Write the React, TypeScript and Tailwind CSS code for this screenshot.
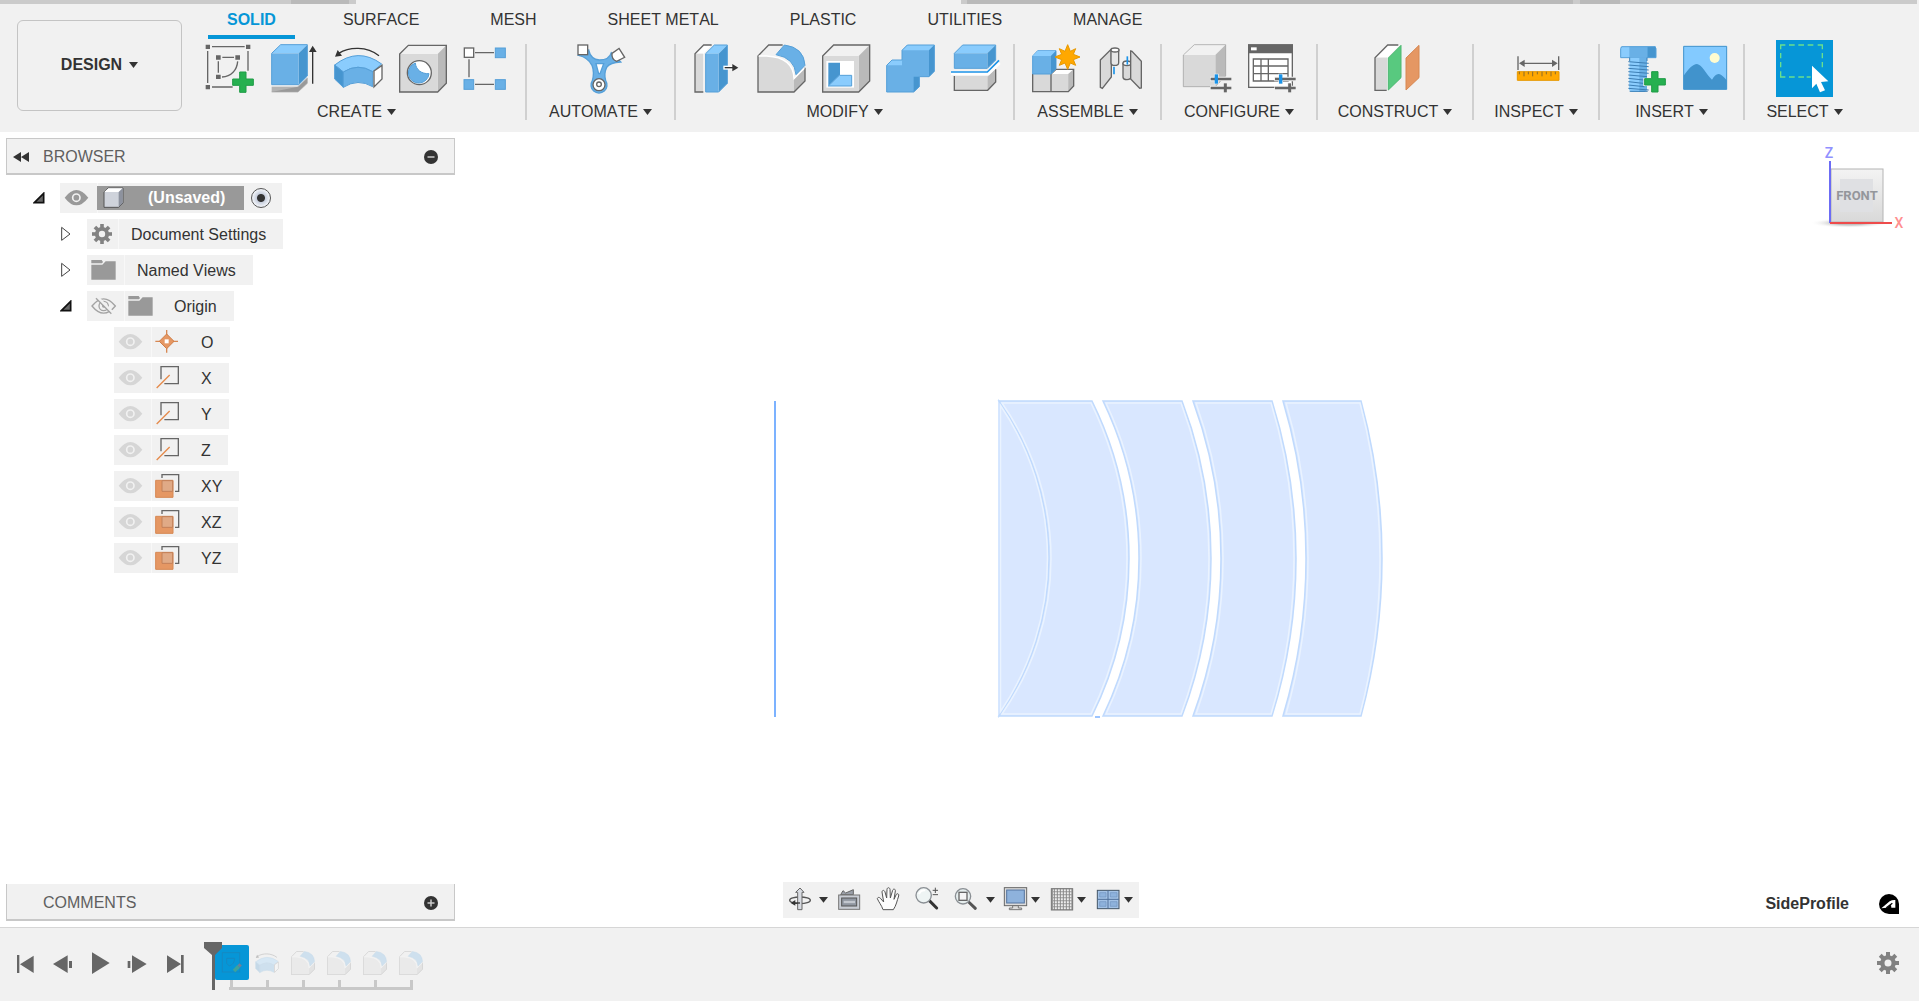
import { useState, type ReactNode } from "react";

const BF = "#69b0e6";
const BT = "#8accfd";
const BS = "#4695cf";
const BL = "#559fd8";
const GF = "#d9d9d9";
const GT = "#f1f1f1";
const GS = "#bababa";
const GL = "#666666";

type IconProps = { x: number; y?: number; w?: number; h?: number; className?: string; children: ReactNode };

/* Icons are drawn at three units per screen pixel. */
function Icon({ x, y = 120, w = 171, h = 171, className = "size-[57px]", children }: IconProps) {
  return (
    <svg viewBox={`${x} ${y} ${w} ${h}`} className={`${className} block shrink-0`} fill="none" aria-hidden="true">
      {children}
    </svg>
  );
}

function Caret() {
  return (
    <svg viewBox="0 0 9 6" className="h-1.5 w-[9px] shrink-0" fill="#333" aria-hidden="true">
      <path d="M0 0h9L4.500 6z" />
    </svg>
  );
}

const Plus = ({ x, y }: { x: number; y: number }) => (
  <path
    transform={`translate(${x} ${y})`}
    d="M22 1H41V22H63V41H41V62H22V41H1V22H22Z"
    fill="#26b050"
    stroke="#1f9c46"
    strokeWidth="3"
  />
);

const SketchIcon = () => (
  <Icon x={594}>
    <g stroke={GL} strokeWidth="4">
      <path d="M636 140H734M623 153V249M744 153V212M636 261H698M667 172H702M655 184V218" />
      <path d="M713 184C711 210 694 230 666 231" />
    </g>
    <g fill={GL}>
      <path d="M617 134h13v13h-13zM738 134h13v13h-13zM617 255h13v13h-13zM648 166h14v13h-14zM706 166h14v13h-14zM648 224h14v13h-14z" />
    </g>
    <Plus x={697} y={215} />
  </Icon>
);

const ExtrudeIcon = () => (
  <Icon x={789}>
    <path d="M815 260H894V276H815Z" fill="#b3b3b3" />
    <path d="M815 276H894L922 250V234L894 260" fill="#999" stroke="#aaa" strokeWidth="2" />
    <path d="M815 160L842 134H922L896 160Z" fill={BT} />
    <path d="M896 160L922 134V228L896 254Z" fill={BS} />
    <path d="M815 160H896V254H815Z" fill={BF} />
    <path d="M815 160L842 134H922V228L896 254H815Z" stroke={BL} strokeWidth="3" />
    <path d="M938 152V251" stroke="#333" strokeWidth="4" />
    <path d="M938 137L950 156H927Z" fill="#333" />
  </Icon>
);

const RevolveShape = () => (
  <>
    <path d="M1004 195Q1074 140 1145 192L1118 215Q1074 188 1030 216Z" fill={BT} stroke={BL} strokeWidth="3" />
    <path d="M1004 195L1030 216V262L1004 237Z" fill={BS} stroke={BL} strokeWidth="3" />
    <path d="M1030 216Q1074 188 1118 215V260Q1074 234 1030 262Z" fill={BF} stroke={BL} strokeWidth="3" />
    <path d="M1122 213L1146 196V237L1122 261Z" fill="#fff" stroke={GL} strokeWidth="4" />
    <path d="M1016 160C1048 140 1100 138 1137 167" stroke="#333" strokeWidth="4" />
    <path d="M1005 170L1013 150L1026 167Z" fill="#333" />
  </>
);

const RevolveIcon = () => (
  <Icon x={984}>
    <RevolveShape />
  </Icon>
);

const HoleIcon = () => (
  <Icon x={1179}>
    <path d="M1199 162L1225 136H1339L1313 162Z" fill={GT} />
    <path d="M1313 162L1339 136V250L1313 276Z" fill={GS} />
    <path d="M1199 162H1313V276H1199Z" fill={GF} />
    <path d="M1199 162L1225 136H1339V250L1313 276H1199Z" stroke={GL} strokeWidth="4" />
    <circle cx="1258" cy="218" r="36" fill="#fff" stroke={GL} strokeWidth="4" />
    <path d="M1246 189A31 31 0 1 0 1287 221C1265 222 1248 210 1246 189Z" fill={BF} stroke={BL} strokeWidth="3" />
  </Icon>
);

const PatternIcon = () => (
  <Icon x={1374}>
    <path d="M1425 158H1482M1407 178V232M1425 253H1482" stroke={GL} strokeWidth="4" />
    <rect x="1393" y="144" width="28" height="28" fill="#fff" stroke={GL} strokeWidth="4" />
    <g fill={BF} stroke={BL} strokeWidth="3">
      <rect x="1486" y="144" width="30" height="29" />
      <rect x="1486" y="239" width="30" height="29" />
      <rect x="1392" y="239" width="29" height="29" />
    </g>
  </Icon>
);

const AutomateIcon = () => (
  <Icon x={216}>
    <path
      d="M236 166Q264 172 276 196Q284 218 277 242A24 24 0 1 0 317 242Q311 220 320 202Q330 187 362 186L334 158Q328 180 298 180Q272 178 266 150Z"
      fill={BF}
      stroke={BL}
      strokeWidth="4"
    />
    <path d="M288 191H311L300 221H296Z" fill="#fff" stroke={BL} strokeWidth="4" />
    <rect x="234" y="135" width="29" height="29" fill="#fff" stroke={GL} strokeWidth="4" />
    <path d="M357 145L374 172L350 184Q334 178 336 160Z" fill="#fff" stroke={GL} strokeWidth="4" />
    <circle cx="297" cy="254" r="18" fill="#fff" stroke={GL} strokeWidth="4" />
    <circle cx="297" cy="253" r="7" fill="#fff" stroke={GL} strokeWidth="4" />
  </Icon>
);

const PressPullIcon = () => (
  <Icon x={558}>
    <path d="M585 161L611 135H635L611 161Z" fill="#fff" />
    <path d="M585 161H609V276H585Z" fill={GF} />
    <path d="M635 135H611L585 161V276H610" stroke={GL} strokeWidth="4" />
    <path d="M617 161L643 135H682L656 161Z" fill={BT} />
    <path d="M656 161L682 135V250L656 276Z" fill={BS} />
    <path d="M617 161H656V276H617Z" fill={BF} />
    <path d="M617 161L643 135H682V250L656 276H617Z" stroke={BL} strokeWidth="3" />
    <path d="M670 203H704" stroke="#fff" strokeWidth="12" />
    <path d="M674 203H702" stroke="#333" strokeWidth="4" />
    <path d="M697 192L715 203L697 214Z" fill="#333" />
  </Icon>
);

const FilletShape = () => (
  <>
    <path d="M774 168L806 135H852L824 166Q796 162 774 168Z" fill={GT} />
    <path d="M774 168H800Q880 172 882 236V276H774Z" fill={GF} />
    <path d="M882 236L915 203V244L882 276Z" fill={GS} />
    <path d="M848 135H806L774 168V276H882L915 243V203" stroke={GL} strokeWidth="4" />
    <path d="M776 168H800Q880 172 882 236L913 205" stroke="#fff" strokeWidth="4" />
    <path d="M853 135Q912 142 915 196L888 224Q884 174 828 164Z" fill={BF} stroke={BL} strokeWidth="3" />
  </>
);

const FilletIcon = () => (
  <Icon x={753}>
    <FilletShape />
  </Icon>
);

const ShellIcon = () => (
  <Icon x={948}>
    <path d="M968 168L1001 135H1109L1076 168Z" fill={GT} />
    <path d="M1076 168L1109 135V243L1076 276Z" fill={GS} />
    <path d="M968 168H1076V276H968Z" fill={GF} />
    <path d="M968 168L1001 135H1109V243L1076 276H968Z" stroke={GL} strokeWidth="4" />
    <path d="M979 183H1062V263H979Z" fill="#fff" />
    <path d="M985 188H1020V224L985 258Z" fill={BS} />
    <path d="M985 258L1018 226H1055V258Z" fill={BT} stroke={BL} strokeWidth="3" />
  </Icon>
);

const CombineIcon = () => (
  <Icon x={1143}>
    <path d="M1160 196L1176 180H1206V151L1222 135H1303V214L1287 230H1258V260L1241 276H1160Z" fill={BF} />
    <path d="M1160 196L1176 180H1206V196ZM1206 151L1222 135H1303L1287 151Z" fill={BT} />
    <path d="M1287 151L1303 135V214L1287 230ZM1241 230H1258V260L1241 276Z" fill={BS} />
    <path
      d="M1160 196L1176 180H1206V151L1222 135H1303V214L1287 230H1258V260L1241 276H1160Z"
      stroke={BL}
      strokeWidth="3"
    />
  </Icon>
);

const SplitIcon = () => (
  <Icon x={1338}>
    <path d="M1363 228H1463L1487 206V246L1463 271H1363Z" fill={GF} />
    <path d="M1463 230L1487 206V246L1463 271Z" fill={GS} />
    <path d="M1363 228V271H1463L1487 246V208" stroke={GL} strokeWidth="4" />
    <path d="M1353 219H1464L1497 187" stroke="#fff" strokeWidth="14" />
    <path d="M1353 216H1462L1497 181" stroke="#1b93e8" strokeWidth="5" />
    <path d="M1363 160L1388 135H1487L1462 160Z" fill={BT} />
    <path d="M1462 160L1487 135V180L1462 205Z" fill={BS} />
    <path d="M1363 160H1462V205H1363Z" fill={BF} />
    <path d="M1363 160L1388 135H1487V180L1462 205H1363Z" stroke={BL} strokeWidth="3" />
  </Icon>
);

const NewComponentIcon = () => (
  <Icon x={80}>
    <path d="M97 222H152V275H97Z" fill={GF} />
    <path d="M152 222L167 208H220V258L204 275H152Z" fill={GF} />
    <path d="M152 222L167 208H220L204 222Z" fill="#fff" />
    <path d="M204 222L220 208V258L204 275Z" fill={GS} />
    <path d="M97 222V275H204L220 258V208H167L152 222V275" stroke={GL} strokeWidth="4" />
    <path d="M97 168L112 152H167V206L152 222H97Z" fill={BF} stroke={BL} strokeWidth="3" />
    <path d="M97 168L112 152H167L152 168Z" fill={BT} />
    <path d="M152 168L167 152V206L152 222Z" fill={BS} />
    <path
      d="M202 134L210 154L226 146L219 163L239 171L219 179L226 196L210 189L202 208L194 189L177 196L184 179L164 171L184 163L177 146L194 154Z"
      fill="#ffa800"
      stroke="#e79800"
      strokeWidth="3"
    />
  </Icon>
);

const JointIcon = () => (
  <Icon x={275}>
    <path d="M300 180L333 147V231L306 265L300 262Z" fill={GF} stroke={GL} strokeWidth="4" />
    <path d="M332 150V188Q332 196 343 196Q355 196 355 188V150Z" fill="#e6e6e6" stroke={GL} strokeWidth="4" />
    <ellipse cx="344" cy="150" rx="12" ry="6" fill="#fff" stroke={GL} strokeWidth="4" />
    <path d="M341 200V223" stroke="#1b93e8" strokeWidth="5" />
    <path d="M368 190V232Q369 239 380 239Q392 238 392 232V190Z" fill={GF} stroke={GL} strokeWidth="4" />
    <ellipse cx="380" cy="190" rx="12" ry="7" fill="#fff" stroke={GL} strokeWidth="4" />
    <path d="M381 169V194" stroke="#1b93e8" strokeWidth="5" />
    <path d="M391 153L395 154L423 184V264L418 265L391 237Z" fill={GF} stroke={GL} strokeWidth="4" />
  </Icon>
);

const Sliders = ({ x }: { x: number }) => (
  <g transform={`translate(${x} 0)`}>
    <path d="M630 237H695M630 264H695M649 221V253M676 248V278" stroke="#f1f1f1" strokeWidth="14" />
    <path d="M632 237H694M632 264H694" stroke={GL} strokeWidth="7" />
    <path d="M676 250V277" stroke={GL} strokeWidth="9" />
    <path d="M649 223V251" stroke="#1b93e8" strokeWidth="10" />
  </g>
);

const ConfigureIcon = () => (
  <Icon x={534}>
    <path d="M550 165L583 134H677L646 165Z" fill={GT} />
    <path d="M646 165L677 134V228L646 260Z" fill={GS} />
    <path d="M550 165H646V260H550Z" fill={GF} />
    <path d="M550 165L583 134H677V228L646 260H550Z" stroke="#999" strokeWidth="2" />
    <Sliders x={0} />
  </Icon>
);

const ConfigTableIcon = () => (
  <Icon x={729}>
    <rect x="746" y="135" width="131" height="127" fill="#fff" stroke={GL} strokeWidth="4" />
    <path d="M744 133H879V160H744Z" fill={GL} />
    <path d="M753 142H770V151H753Z" fill="#fff" />
    <path d="M760 177H864V243H760ZM783 177V243M805 177V243M760 198H864M760 221H864" stroke={GL} strokeWidth="4" />
    <Sliders x={193} />
  </Icon>
);

const ConstructIcon = () => (
  <Icon x={1100}>
    <path d="M1124 173L1160 135H1198L1162 172Z" fill="#fff" />
    <path d="M1124 173H1160V271H1124Z" fill={GF} />
    <path d="M1194 135H1162L1124 173V271H1159" stroke={GL} strokeWidth="4" />
    <path d="M1164 174L1202 136V233L1164 270Z" fill="#58c97f" stroke="#4cb871" strokeWidth="3" />
    <path d="M1217 174L1256 136V233L1217 270Z" fill="#e59763" stroke="#d78853" strokeWidth="3" />
  </Icon>
);

const MeasureIcon = () => (
  <Icon x={202}>
    <path d="M232 169V210M354 169V210M240 190H346" stroke={GL} strokeWidth="4" />
    <path d="M235 190L252 179V201ZM351 190L334 179V201Z" fill={GL} />
    <path d="M230 215H355V241H230Z" fill="#ffa800" stroke="#e79800" strokeWidth="3" />
    <path
      d="M236 215V223M250 215V229M263 215V223M276 215V229M290 215V223M304 215V229M317 215V223M331 215V229M344 215V223"
      stroke="#8a6a2a"
      strokeWidth="3"
    />
  </Icon>
);

const BoltIcon = () => (
  <Icon x={512}>
    <path d="M541 140H647V173H541Z" fill={BT} />
    <path d="M567 140H621V173H567Z" fill={BF} />
    <path d="M621 140H647V173H621Z" fill={BS} />
    <path d="M544 140H644L647 146V173H541V146Z" stroke={BL} strokeWidth="3" />
    <path d="M568 173H620V270L612 276H574L566 270Z" fill={BT} />
    <path d="M597 173H620V270L612 276H597Z" fill={BF} />
    <path
      d="M568 173V183M620 173V183M564 185L625 190M564 195L625 200M564 205L625 210M564 215L625 220M564 225L620 230M564 235L610 240M564 245L608 250M564 255L612 260M564 265L625 270M568 274H622"
      stroke="#3d7fb5"
      strokeWidth="3"
    />
    <path d="M632 212H656V234H678V258H656V280H632V258H609V234H632Z" fill="#f1f1f1" />
    <Plus x={612} y={214} />
  </Icon>
);

const ImageIcon = () => (
  <Icon x={707}>
    <path d="M730 139H859V268H730Z" fill="#83caff" />
    <path d="M730 227C745 207 757 192 770 192C786 194 798 224 815 239C822 228 828 221 836 222C844 223 851 232 859 241V268H730Z" fill="#4193cc" />
    <circle cx="823" cy="174" r="15" fill="#fffcd0" />
    <path d="M730 139H859V268H730Z" stroke="#3f92cc" strokeWidth="3" />
  </Icon>
);

const SelectIcon = () => (
  <Icon x={1008}>
    <path d="M1008 120H1179V291H1008Z" fill="#0696d7" />
    <path
      d="M1022 148V135H1036M1047 135H1064M1075 135H1092M1103 135H1120M1133 135H1147V148M1147 159V175M1147 186V202M1022 159V175M1022 186V202M1022 214V231H1036M1047 231H1064M1075 231H1092M1100 231H1112"
      stroke="#6ae08d"
      strokeWidth="4"
    />
    <path d="M1116 197L1165 244L1143 246L1155 271L1140 277L1129 251L1116 265Z" fill="#fff" />
  </Icon>
);

type Group = { label: string; size: string; icons: [string, () => ReactNode][] };

const groups: Group[] = [
  {
    label: "CREATE",
    size: "min-w-[337px]",
    icons: [
      ["Create Sketch", SketchIcon],
      ["Extrude", ExtrudeIcon],
      ["Revolve", RevolveIcon],
      ["Hole", HoleIcon],
      ["Pattern", PatternIcon],
    ],
  },
  { label: "AUTOMATE", size: "min-w-[147px]", icons: [["Automated Modeling", AutomateIcon]] },
  {
    label: "MODIFY",
    size: "min-w-[337px]",
    icons: [
      ["Press Pull", PressPullIcon],
      ["Fillet", FilletIcon],
      ["Shell", ShellIcon],
      ["Combine", CombineIcon],
      ["Split Body", SplitIcon],
    ],
  },
  {
    label: "ASSEMBLE",
    size: "min-w-[145px]",
    icons: [
      ["New Component", NewComponentIcon],
      ["Joint", JointIcon],
    ],
  },
  {
    label: "CONFIGURE",
    size: "min-w-[154px]",
    icons: [
      ["Configure", ConfigureIcon],
      ["Configuration Table", ConfigTableIcon],
    ],
  },
  { label: "CONSTRUCT", size: "min-w-[154px]", icons: [["Offset Plane", ConstructIcon]] },
  { label: "INSPECT", size: "min-w-[124px]", icons: [["Measure", MeasureIcon]] },
  {
    label: "INSERT",
    size: "min-w-[143px]",
    icons: [
      ["Insert Fastener", BoltIcon],
      ["Insert Image", ImageIcon],
    ],
  },
  { label: "SELECT", size: "min-w-[119px]", icons: [["Select", SelectIcon]] },
];

const tabs = ["SOLID", "SURFACE", "MESH", "SHEET METAL", "PLASTIC", "UTILITIES", "MANAGE"];

function Header() {
  const [active, setActive] = useState("SOLID");
  return (
    <header className="shrink-0 bg-[#f1f1f1] pb-2">
      <div className="flex h-1">
        <div className="w-[291px] bg-[#cbcbcb]" />
        <div className="w-[58px] bg-[#bababa]" />
        <div className="w-[7px] bg-[#cbcbcb]" />
        <div className="w-[605px]" />
        <div className="w-1.5 bg-[#cbcbcb]" />
        <div className="w-[606px] bg-[#bababa]" />
        <div className="w-[7px] bg-[#cbcbcb]" />
        <div className="w-10 bg-[#bababa]" />
        <div className="mr-0.5 flex-1 bg-[#cbcbcb]" />
      </div>
      <div className="flex">
        <button className="mt-4 ml-[17px] flex h-[91px] w-[165px] shrink-0 items-center justify-center gap-[7px] rounded-md border border-[#c4c4c4] pb-0.5 font-bold">
          DESIGN
          <Caret />
        </button>
        <div className="ml-1.5 min-w-0 flex-1">
          <nav className="flex gap-[33px] pl-5" aria-label="Workspaces">
            {tabs.map((t) => (
              <button
                key={t}
                onClick={() => setActive(t)}
                className={`h-[35px] shrink-0 border-b-4 px-[19px] leading-4 whitespace-nowrap first:-mr-1 ${
                  t === active ? "border-[#0696d7] font-bold text-[#0696d7]" : "border-transparent"
                }`}
              >
                {t}
              </button>
            ))}
          </nav>
          <div className="flex overflow-hidden pt-px">
            {groups.map((g, i) => (
              <div key={g.label} className="flex shrink-0">
                <div className={`flex flex-col items-center ${g.size}`}>
                  <div className="flex gap-2">
                    {g.icons.map(([name, Art]) => (
                      <button key={name} aria-label={name}>
                        <Art />
                      </button>
                    ))}
                  </div>
                  <button className="mt-[3px] flex h-6 items-center gap-[5px]">
                    {g.label}
                    <Caret />
                  </button>
                </div>
                {i < groups.length - 1 && <div className="mt-1 h-[76px] w-0.5 bg-[#d0d0d0]" />}
              </div>
            ))}
          </div>
        </div>
      </div>
    </header>
  );
}

/* ---------- Browser tree ---------- */

const Eye = ({ tone }: { tone: string }) => (
  <Icon x={180} y={160} w={111} h={90} className="h-[30px] w-[37px]">
    <path d="M194 204Q229 158 265 204Q229 250 194 204Z" fill={tone} />
    <circle cx="229" cy="204" r="11" stroke="#f1f1f1" strokeWidth="5" />
  </Icon>
);

const EyeOff = () => (
  <Icon x={261} y={484} w={111} h={90} className="h-[30px] w-[37px]">
    <path d="M276 529Q311 486 346 529Q311 572 276 529Z" stroke="#a3a3a3" strokeWidth="4" />
    <circle cx="311" cy="529" r="14" stroke="#a3a3a3" strokeWidth="4" />
    <circle cx="311" cy="529" r="5" fill="#a3a3a3" />
    <path d="M293 504L339 550" stroke="#f1f1f1" strokeWidth="9" />
    <path d="M288 506L334 552" stroke="#a3a3a3" strokeWidth="4" />
  </Icon>
);

const Folder = () => (
  <Icon x={261} y={376} w={111} h={90} className="h-[30px] w-[37px]">
    <path d="M274 391H305L309 397L306 401H274Z" fill="#999" />
    <path d="M274 405H307L317 395H347V450H274Z" fill="#999" />
  </Icon>
);

const gearTeeth = [0, 45, 90, 135, 180, 225, 270, 315];

const Gear = ({ className }: { className: string }) => (
  <Icon x={0} y={0} w={66} h={66} className={className}>
    {gearTeeth.map((a) => (
      <path key={a} d="M27 0H39V16H27Z" fill="#828282" transform={`rotate(${a} 33 33)`} />
    ))}
    <circle cx="33" cy="33" r="17" stroke="#828282" strokeWidth="13" />
  </Icon>
);

const Origin = () => (
  <Icon x={455} y={21} w={111} h={90} className="h-[30px] w-[37px]">
    <path d="M502 30V98M468 64H536" stroke="#d78853" strokeWidth="4" />
    <path d="M502 42L524 64L502 86L480 64Z" fill="#e59763" stroke="#cf7e48" strokeWidth="3" />
    <path d="M496 58H508V70H496Z" fill="#fff" />
  </Icon>
);

const Axis = () => (
  <Icon x={455} y={129} w={111} h={90} className="h-[30px] w-[37px]">
    <path d="M485 178V140H537V191H495" stroke={GL} strokeWidth="4" />
    <path d="M472 204L511 165" stroke="#e58a4a" strokeWidth="4" />
  </Icon>
);

const Plane = () => (
  <Icon x={455} y={453} w={111} h={90} className="h-[30px] w-[37px]">
    <path d="M488 474V464H538V514H527" stroke={GL} strokeWidth="4" />
    <path d="M469 481H521V532H469Z" fill="#e59763" stroke="#d78853" strokeWidth="3" />
    <path d="M488 482H520V514H488Z" fill="#e0aa86" stroke="#c28058" strokeWidth="3" />
  </Icon>
);

const Twisty = ({ open }: { open: boolean }) => (
  <button aria-label={open ? "Collapse" : "Expand"} className="mr-[15px] w-3 shrink-0">
    {open ? (
      <Icon x={99} y={186} w={36} h={36} className="size-3">
        <path d="M103 218L131 190V218Z" fill="#666" stroke="#111" strokeWidth="5" />
      </Icon>
    ) : (
      <Icon x={180} y={288} w={36} h={48} className="h-4 w-3">
        <path d="M185 292V331L210 312Z" fill="#fff" stroke="#444" strokeWidth="3" />
      </Icon>
    )}
  </button>
);

function Cell({ children }: { children: ReactNode }) {
  return <span className="flex h-[30px] shrink-0 items-center shadow-[1px_0_0_#f8f8f8]">{children}</span>;
}

function Row({ indent, open, children }: { indent: string; open?: boolean; children: ReactNode }) {
  return (
    <li className={`flex items-center ${indent}`}>
      {open !== undefined && <Twisty open={open} />}
      <div className="flex h-[30px] items-center bg-[#f1f1f1]">{children}</div>
    </li>
  );
}

function Label({ children }: { children: ReactNode }) {
  return <span className="pt-px pr-[17px] pl-[13px]">{children}</span>;
}

const leaves: [string, () => ReactNode][] = [
  ["O", Origin],
  ["X", Axis],
  ["Y", Axis],
  ["Z", Axis],
  ["XY", Plane],
  ["XZ", Plane],
  ["YZ", Plane],
];

const Badge = ({ plus }: { plus?: boolean }) => (
  <svg viewBox="0 0 14 14" className="size-3.5" aria-hidden="true">
    <circle cx="7" cy="7" r="7" fill="#333" />
    <path d={plus ? "M3.500 7h7M7 3.500v7" : "M3.500 7h7"} stroke="#ccc" strokeWidth="1.500" />
  </svg>
);

function Browser() {
  return (
    <section aria-label="Browser" className="relative w-[449px]">
      <div className="flex h-[37px] items-center border border-b-2 border-[#c8c8c8] bg-[#f1f1f1] pt-px pl-1.5 text-[#5f5f5f]">
        <button aria-label="Collapse panel">
          <svg viewBox="0 0 16 10" className="h-2.5 w-4" fill="#333" aria-hidden="true">
            <path d="M8 0v10L0 5zM16 0v10L8 5z" />
          </svg>
        </button>
        <h2 className="ml-3.5 flex-1">BROWSER</h2>
        <button aria-label="Hide browser" className="mr-4">
          <Badge />
        </button>
      </div>
      <ul className="-ml-1.5 flex flex-col gap-1.5 pt-2">
        <Row indent="pl-[33px]" open>
          <Cell>
            <Eye tone="#999" />
          </Cell>
          <span className="flex h-6 w-[147px] items-center bg-[#999] pl-1.5 font-bold text-white">
            <Icon x={311} y={168} w={63} h={66} className="mr-6 h-[22px] w-[21px]">
              <path d="M314 183L326 171H371V216L358 229H314Z" fill="#cfd3db" stroke="#555" strokeWidth="3" />
              <path d="M315 183L327 172H370L358 183Z" fill="#fff" />
              <path d="M358 183L370 172V216L358 228Z" fill="#8d929e" />
            </Icon>
            (Unsaved)
          </span>
          <label className="flex w-[38px] items-center pl-[7px]">
            <input
              type="radio"
              defaultChecked
              aria-label="Activate component"
              className="size-5 appearance-none rounded-full border border-[#555] bg-[radial-gradient(circle,#333_0_3.5px,#c9d0de_4.5px,#f4f6fa_9px)]"
            />
          </label>
        </Row>
        <Row indent="pl-[60px]" open={false}>
          <Cell>
            <span className="w-[31px] pl-[5px]">
              <Gear className="size-5" />
            </span>
          </Cell>
          <Label>Document Settings</Label>
        </Row>
        <Row indent="pl-[60px]" open={false}>
          <Cell>
            <Folder />
          </Cell>
          <Label>Named Views</Label>
        </Row>
        <Row indent="pl-[60px]" open>
          <Cell>
            <EyeOff />
          </Cell>
          <Folder />
          <Label>Origin</Label>
        </Row>
        {leaves.map(([name, Art]) => (
          <Row key={name} indent="pl-[114px]">
            <Cell>
              <Eye tone="#d6d6d6" />
            </Cell>
            <Art />
            <Label>{name}</Label>
          </Row>
        ))}
      </ul>
    </section>
  );
}

/* ---------- Sketch geometry ---------- */

const TOP = 401;
const BOTTOM = 716;

const radius = (half: number, bulge: number) => (half * half + bulge * bulge) / (2 * bulge);

function band(lx: number, lb: number, rx: number, rb: number, inset = 0) {
  const t = TOP + inset;
  const b = BOTTOM - inset;
  const half = (b - t) / 2;
  const l = lx + inset * 1.5;
  const r = rx - inset / 2;
  const rl = radius(half, lb + inset - l);
  const rr = radius(half, rb - inset - r);
  return `M${l} ${t}H${r}A${rr} ${rr} 0 0 1 ${r} ${b}H${l}A${rl} ${rl} 0 0 0 ${l} ${t}Z`;
}

function lens(x: number, bulgeX: number, inset = 0) {
  const t = TOP + inset * 3;
  const b = BOTTOM - inset * 3;
  const r = radius((b - t) / 2, bulgeX - x - inset * 2);
  return `M${x + inset} ${t}A${r} ${r} 0 0 1 ${x + inset} ${b}Z`;
}

const bands: [number, number, number, number][] = [
  [999, 1049, 1092, 1129],
  [1103, 1139, 1182, 1211],
  [1193, 1221, 1272, 1296],
  [1283, 1306, 1361, 1382],
];

function SketchView() {
  return (
    <svg
      viewBox="0 132 1919 795"
      className="absolute inset-0 h-full w-full"
      fill="none"
      role="img"
      aria-label="Side profile sketch"
    >
      <path d="M775 401V717" stroke="#7cb2ff" strokeWidth="2" />
      <path d={lens(999, 1049)} fill="#d9e7ff" stroke="#c9dfff" strokeWidth="1.500" />
      {bands.map((b) => (
        <path key={b[0]} d={band(...b)} fill="#d9e7ff" stroke="#c0dafd" strokeWidth="1.500" />
      ))}
      <path d={lens(999, 1049, 1.5)} stroke="#eaf3ff" strokeWidth="1.500" />
      {bands.map((b) => (
        <path key={b[0]} d={band(...b, 2)} stroke="#eaf3ff" strokeWidth="1.500" />
      ))}
      <path d="M1095 717H1100" stroke="#7cb2ff" strokeWidth="1.500" />
    </svg>
  );
}

function ViewCube() {
  return (
    <svg
      viewBox="1800 140 110 95"
      className="absolute top-2 right-[9px] h-[95px] w-[110px]"
      role="img"
      aria-label="View cube"
    >
      <defs>
        <linearGradient id="face" x1="0" y1="0" x2="0" y2="1">
          <stop offset="0" stopColor="#f3f3f3" />
          <stop offset="1" stopColor="#d9d9d9" />
        </linearGradient>
        <radialGradient id="shade">
          <stop offset="0.400" stopColor="#999" stopOpacity="0.600" />
          <stop offset="1" stopColor="#fff" stopOpacity="0" />
        </radialGradient>
      </defs>
      <ellipse cx="1850" cy="223" rx="40" ry="5" fill="url(#shade)" />
      <rect x="1831" y="169" width="52" height="53" fill="url(#face)" stroke="#b4b4b4" />
      <rect x="1840" y="179" width="33" height="33" fill="#dfe0e3" />
      <path d="M1830 161V223" stroke="#6c6cf5" strokeWidth="2" />
      <path d="M1830 223H1892" stroke="#ee4b4b" strokeWidth="2" />
      <g fontFamily="Roboto, sans-serif" textAnchor="middle">
        <text x="1857" y="200" fontSize="13" fontWeight="700" fill="#94969b">
          FRONT
        </text>
        <text x="1829" y="158" fontSize="14" fontWeight="500" fill="#9090ff">
          Z
        </text>
        <text x="1899" y="228" fontSize="14" fontWeight="500" fill="#ff8f8f">
          X
        </text>
      </g>
    </svg>
  );
}

/* ---------- Navigation bar ---------- */

type NavItem = { name: string; x: number; w: number; size: string; art: ReactNode };

const drop = (x: number) => <path d={`M${x} 81h27l-13.500 17z`} fill="#333" />;

const navItems: NavItem[] = [
  {
    name: "Orbit",
    x: 39,
    w: 150,
    size: "w-[50px]",
    art: (
      <>
        <ellipse cx="90" cy="91" rx="31" ry="10" stroke="#555" strokeWidth="4" />
        <path d="M90 54L102 67H96V119H83V67H77Z" fill="#d9dce2" stroke="#666" strokeWidth="3" />
        <path d="M66 99H90" stroke="#333" strokeWidth="4" />
        <path d="M62 99L76 90V107Z" fill="#333" />
        {drop(147)}
      </>
    ),
  },
  {
    name: "Look At",
    x: 189,
    w: 105,
    size: "w-[35px]",
    art: (
      <>
        <path d="M212 74L219 62L227 69L250 59V74Z" fill="#9a9fa8" stroke="#666" strokeWidth="3" />
        <rect x="206" y="75" width="63" height="43" fill="#c9cdd4" stroke="#777" strokeWidth="3" />
        <rect x="215" y="84" width="45" height="24" fill="#9096a0" stroke="#555" strokeWidth="3" />
        <path d="M221 96H255" stroke="#c3c7ce" strokeWidth="7" />
      </>
    ),
  },
  {
    name: "Pan",
    x: 294,
    w: 117,
    size: "w-[39px]",
    art: (
      <path
        d="M339 119C335 106 326 96 322 86C323 80 330 82 333 87L341 96L336 66C337 59 343 60 345 66L350 84L351 58C352 51 359 52 360 58L361 84L368 61C370 55 377 57 376 63L372 88L379 73C382 69 388 72 386 78C381 92 379 106 370 119Z"
        fill="#fdfdfd"
        stroke="#555"
        strokeWidth="3"
        strokeLinejoin="round"
      />
    ),
  },
  {
    name: "Zoom",
    x: 411,
    w: 120,
    size: "w-10",
    art: (
      <>
        <path d="M478 92L500 114" stroke="#333" strokeWidth="9" strokeLinecap="round" />
        <circle cx="461" cy="76" r="23" fill="#eef4f4" stroke="#8a8f94" strokeWidth="4" />
        <path d="M447 72Q452 60 466 61" stroke="#fff" strokeWidth="6" />
        <path d="M488 61H504M496 53V69M488 74H504" stroke="#555" strokeWidth="3" />
      </>
    ),
  },
  {
    name: "Fit",
    x: 531,
    w: 156,
    size: "w-[52px]",
    art: (
      <>
        <path d="M596 96L616 115" stroke="#555" strokeWidth="9" strokeLinecap="round" />
        <circle cx="579" cy="79" r="23" fill="#e6eeee" stroke="#8a8f94" strokeWidth="4" />
        <rect x="567" y="67" width="24" height="24" fill="#f5f5f5" stroke="#666" strokeWidth="4" />
        {drop(648)}
      </>
    ),
  },
  {
    name: "Display Settings",
    x: 687,
    w: 135,
    size: "w-[45px]",
    art: (
      <>
        <path d="M728 106H745V114H755V119H718V114H728Z" fill="#ddd" stroke="#777" strokeWidth="3" />
        <rect x="703" y="53" width="67" height="54" fill="#dcdcdc" stroke="#666" strokeWidth="3" />
        <rect x="710" y="60" width="53" height="39" fill="#8eb2dc" stroke="#5575a0" strokeWidth="3" />
        {drop(783)}
      </>
    ),
  },
  {
    name: "Grid and Snaps",
    x: 822,
    w: 141,
    size: "w-[47px]",
    art: (
      <>
        <rect x="844" y="56" width="64" height="64" fill="#999" />
        <path
          d="M849 61H904M849 70H904M849 79H904M849 88H904M849 97H904M849 106H904M849 115H904"
          stroke="#eee"
          strokeWidth="6"
        />
        <path d="M853 56V120M862 56V120M871 56V120M880 56V120M889 56V120M898 56V120" stroke="#888" strokeWidth="3" />
        <rect x="844" y="56" width="64" height="64" stroke="#777" strokeWidth="3" />
        {drop(921)}
      </>
    ),
  },
  {
    name: "Viewports",
    x: 963,
    w: 144,
    size: "w-12",
    art: (
      <>
        <rect x="982" y="61" width="65" height="55" fill="#a3c2e6" stroke="#456" strokeWidth="3" />
        <path d="M1014 61V116M982 88H1047" stroke="#4f6f99" strokeWidth="3" />
        <path
          d="M989 68H1008V81H989ZM1021 68H1041V81H1021ZM989 95H1008V109H989ZM1021 95H1041V109H1021Z"
          fill="#8eb2dc"
          stroke="#7094c0"
          strokeWidth="2"
        />
        {drop(1062)}
      </>
    ),
  },
];

function BottomRow() {
  return (
    <div className="relative grid grid-cols-[1fr_auto_1fr] items-end pl-0.5">
      <section
        aria-label="Comments"
        className="mb-1.5 ml-1 flex h-[37px] w-[449px] items-center border-x border-b-2 border-[#c8c8c8] bg-[#f1f1f1] pt-0.5 pl-9 text-[#5f5f5f]"
      >
        <h2 className="flex-1">COMMENTS</h2>
        <button aria-label="Show comments" className="mr-4">
          <Badge plus />
        </button>
      </section>
      <div className="mb-[9px] flex bg-[#f1f1f1]" role="toolbar" aria-label="Navigation">
        {navItems.map((n) => (
          <button key={n.name} aria-label={n.name}>
            <Icon x={n.x} y={36} w={n.w} h={108} className={`h-9 ${n.size}`}>
              {n.art}
            </Icon>
          </button>
        ))}
      </div>
      <div className="mr-5 mb-[11px] flex items-center justify-end gap-[30px] font-bold">
        SideProfile
        <Icon x={539} y={70} w={60} h={60} className="size-5">
          <path d="M569 70A30 30 0 0 0 569 130H599V100A30 30 0 0 0 569 70Z" fill="#000" />
          <path d="M546 113L571 92Q579 87 588 88V111H576L575 102L562 111Z" fill="#fff" />
          <path d="M561 111L579 98" stroke="#000" strokeWidth="4" />
        </Icon>
      </div>
    </div>
  );
}

/* ---------- Timeline ---------- */

const transport: [string, number, string][] = [
  ["Go to start", 21, "M51 255H58V309H51ZM101 257V309L60 283Z"],
  ["Step back", 135, "M203 256V309L159 282ZM207 273H216V294H207Z"],
  ["Play", 249, "M276 247L329 279L276 312Z"],
  ["Step forward", 363, "M383 273H391V294H383ZM396 256L440 282L396 309Z"],
  ["Go to end", 477, "M501 256L543 282L501 309ZM543 255H551V309H543Z"],
];

const TimelineRevolve = () => (
  <Icon x={1000} y={134} w={150} h={136} className="h-[22px] w-6 opacity-25">
    <RevolveShape />
  </Icon>
);

const TimelineFillet = () => (
  <Icon x={772} y={132} w={146} h={146} className="size-6 opacity-25">
    <FilletShape />
  </Icon>
);

const TimelineSketch = () => (
  <Icon x={645} y={225} w={102} h={105} className="h-[35px] w-[34px]">
    <rect x="667" y="248" width="52" height="58" stroke="#1689c2" strokeWidth="3" />
    <path d="M680 265H704Q703 283 688 288L680 280Z" stroke="#1689c2" strokeWidth="3" />
    <path d="M702 303L716 289" stroke="#3fa29a" strokeWidth="11" />
    <path d="M716 289L722 283" stroke="#6f8098" strokeWidth="10" />
  </Icon>
);

const features: [string, () => ReactNode][] = [
  ["Sketch1", TimelineSketch],
  ["Revolve1", TimelineRevolve],
  ["Fillet1", TimelineFillet],
  ["Fillet2", TimelineFillet],
  ["Fillet3", TimelineFillet],
  ["Fillet4", TimelineFillet],
];

function Timeline() {
  return (
    <footer className="flex h-[74px] shrink-0 border-t border-[#d6d6d6] bg-[#f1f1f1]">
      <div className="mt-[17px] ml-[7px] flex">
        {transport.map(([name, x, d]) => (
          <button key={name} aria-label={name} className="h-9">
            <Icon x={x} y={225} w={114} h={108} className="h-9 w-[38px]">
              <path d={d} fill="#666" />
            </Icon>
          </button>
        ))}
      </div>
      <div className="relative ml-4 flex-1">
        <ol className="flex pt-[17px]">
          {features.map(([name, Art], i) => (
            <li key={name} className="flex w-9 flex-col items-center">
              <button
                aria-label={name}
                className={`flex h-[35px] items-center justify-center ${
                  i === 0 ? "ml-0.5 w-[34px] rounded-xs bg-[#0696d7]" : "w-9"
                }`}
              >
                <Art />
              </button>
              <div className="h-[7px] w-[3px] bg-[#c8c8c8]" />
              <div
                className={`h-[3px] bg-[#c8c8c8] ${
                  i === 0 ? "w-5 self-end" : i === features.length - 1 ? "w-5 self-start" : "w-full"
                }`}
              />
            </li>
          ))}
        </ol>
        <Icon x={612} y={216} w={54} h={144} className="absolute top-3.5 -left-[9px] h-12 w-[18px]">
          <path d="M612 216H666V234L645 255V360H636V255L612 234Z" fill="#666" />
        </Icon>
      </div>
      <button aria-label="Timeline settings" className="mr-5 mb-1 self-center">
        <Gear className="size-[22px]" />
      </button>
    </footer>
  );
}

export default function App() {
  return (
    <div className="flex h-screen min-h-[640px] flex-col overflow-hidden bg-white font-['Liberation_Sans',Arial,sans-serif] text-base text-[#333] [font-kerning:none]">
      <Header />
      <main className="relative flex flex-1 flex-col justify-between pt-1.5">
        <SketchView />
        <ViewCube />
        <div className="pl-1.5">
          <Browser />
        </div>
        <BottomRow />
      </main>
      <Timeline />
    </div>
  );
}
